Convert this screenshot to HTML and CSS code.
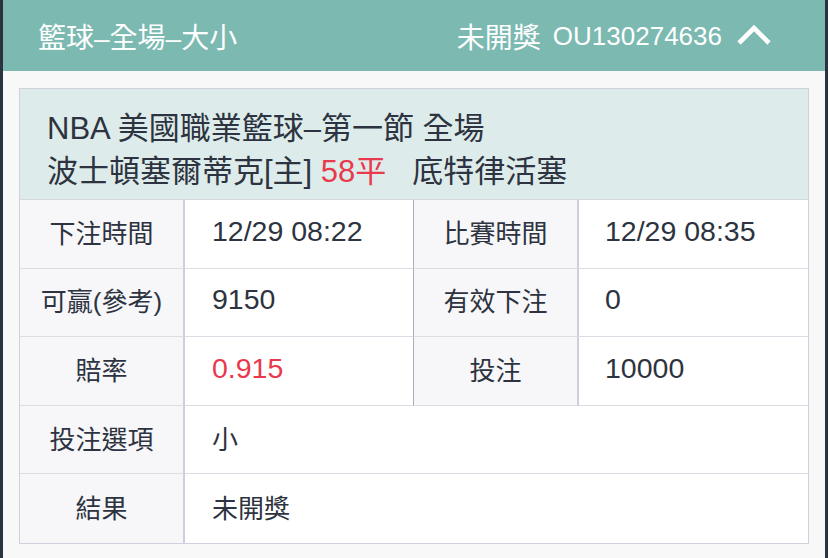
FILE: index.html
```html
<!DOCTYPE html>
<html lang="zh-Hant">
<head>
    <meta charset="UTF-8">
    <meta name="viewport" content="width=device-width, initial-scale=1.0">
    <title>注單詳情</title>
    <link rel="stylesheet" href="styles.css">
</head>
<body>
    <div class="panel">
        <div class="panel-head">
            <span class="head-title">籃球–全場–大小</span>
            <div class="head-right">
                <span>未開獎</span>
                <span class="order-no">OU130274636</span>
                <svg class="chevron" width="36" height="22" viewBox="0 0 36 22">
                    <polyline points="3,19 18,4 33,19" fill="none" stroke="#fff" stroke-width="4.6"/>
                </svg>
            </div>
        </div>

        <div class="panel-body">
            <div class="bet-card">
                <div class="match-info">
                    <div>NBA 美國職業籃球–第一節 全場</div>
                    <div>波士頓塞爾蒂克[主] <span class="red">58平</span>&nbsp;&nbsp; 底特律活塞</div>
                </div>

                <div class="bet-grid">
                    <div class="cell label">下注時間</div>
                    <div class="cell value num">12/29 08:22</div>
                    <div class="cell label label2">比賽時間</div>
                    <div class="cell value num">12/29 08:35</div>

                    <div class="cell label">可贏(參考)</div>
                    <div class="cell value num">9150</div>
                    <div class="cell label label2">有效下注</div>
                    <div class="cell value num">0</div>

                    <div class="cell label">賠率</div>
                    <div class="cell value num red">0.915</div>
                    <div class="cell label label2">投注</div>
                    <div class="cell value num">10000</div>

                    <div class="cell label">投注選項</div>
                    <div class="cell value wide">小</div>

                    <div class="cell label bottom">結果</div>
                    <div class="cell value wide bottom">未開獎</div>
                </div>
            </div>
        </div>
    </div>
</body>
</html>
```

FILE: styles.css
```css
body { margin: 0; background: #2b3341; font-family: "Liberation Sans", "Noto Sans CJK TC", sans-serif; color: #2d3340; }
.panel { margin: 0 3px; background: #f8f8f9; height: 558px; }
.panel-head { height: 71px; background: #7bb9b1; color: #fff; display: flex; align-items: center; justify-content: space-between; padding: 0 53px 0 35px; font-size: 28px; }
.head-title { padding-top: 1px; }
.head-right { display: flex; align-items: center; padding-top: 1px; }
.order-no { margin-left: 12px; font-size: 26px; }
.chevron { margin-left: 14px; margin-top: -2px; }
.panel-body { padding: 17px 16px 0; }
.bet-card { border: 1px solid #cfd1dc; background: #fff; }
.match-info { background: #ddecea; padding: 18px 27px 6px; font-size: 31px; line-height: 43px; border-bottom: 1px solid #d6d8e0; }
.red { color: #e8394d; }
.bet-grid { display: grid; grid-template-columns: 165px 228px 166px 1fr; }
.cell { box-sizing: border-box; height: 68.6px; padding-bottom: 5px; display: flex; align-items: center; font-size: 26px; border-bottom: 1px solid #dcdde4; }
.cell.bottom { border-bottom: none; }
.label { justify-content: center; background: #f7f7fa; border-right: 2px solid #cdcfdb; }
.label2 { border-left: 1px solid #a9adba; }
.value { padding-left: 27px; }
.value.num { font-size: 28.5px; }
.label2 + .value { padding-left: 26px; }
.wide { grid-column: span 3; }
```
